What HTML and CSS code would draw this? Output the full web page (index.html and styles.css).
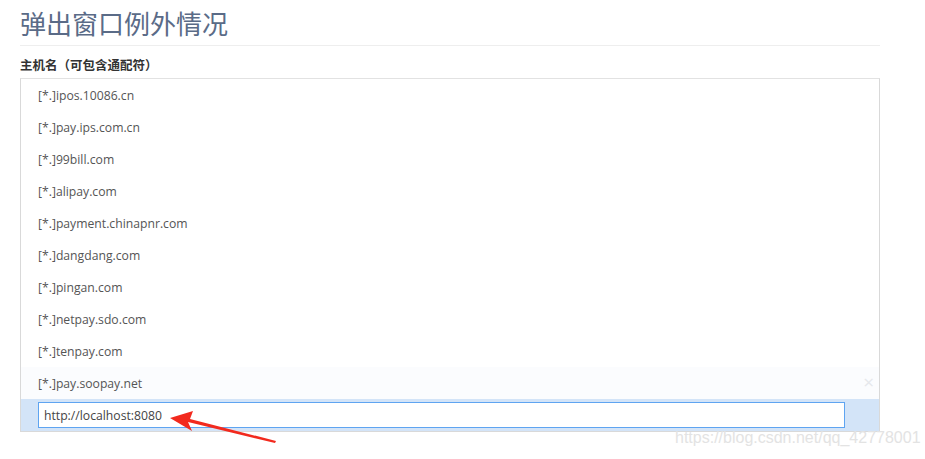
FILE: index.html
```html
<!DOCTYPE html>
<html lang="zh">
<head>
<meta charset="utf-8">
<link rel="stylesheet" href="styles.css">
</head>
<body>
<div class="page">
  <h1 class="title">弹出窗口例外情况</h1>
  <div class="label">主机名（可包含通配符）</div>
  <div class="list">
    <div class="row">[*.]ipos.10086.cn</div>
    <div class="row">[*.]pay.ips.com.cn</div>
    <div class="row">[*.]99bill.com</div>
    <div class="row">[*.]alipay.com</div>
    <div class="row">[*.]payment.chinapnr.com</div>
    <div class="row">[*.]dangdang.com</div>
    <div class="row">[*.]pingan.com</div>
    <div class="row">[*.]netpay.sdo.com</div>
    <div class="row">[*.]tenpay.com</div>
    <div class="row hover">[*.]pay.soopay.net<span class="close">×</span></div>
    <div class="row editing"><div class="input">http://localhost:8080</div></div>
  </div>
  <svg class="arrow" width="120" height="40" viewBox="0 0 120 40">
    <polygon points="7,8 30,1 27,9 113,31 112,33 25,12 29,21" fill="#f22a1e"/>
  </svg>
  <div class="watermark">https://blog.csdn.net/qq_42778001</div>
</div>
</body>
</html>
```
FILE: styles.css
```css
html, body {
  margin: 0;
  padding: 0;
  background: #fff;
}
body {
  font-family: "Segoe UI", "Open Sans", "Noto Sans", "Noto Sans CJK SC", sans-serif;
}
.page {
  position: relative;
  width: 925px;
  height: 459px;
  padding: 0 45px 0 20px;
  box-sizing: border-box;
}
.title {
  margin: 0;
  padding: 6px 0 6px;
  font-family: "Noto Sans CJK SC", sans-serif;
  font-weight: 400;
  font-size: 26px;
  line-height: 33px;
  color: #5a6b87;
  border-bottom: 1px solid #eeeeee;
}
.label {
  margin-top: 10px;
  font-family: "Noto Sans CJK SC", sans-serif;
  font-weight: 700;
  font-size: 12.5px;
  line-height: 17px;
  color: #333;
}
.list {
  margin-top: 5px;
  border: 1px solid #d9d9d9;
  border-top-color: #e2e2e2;
  display: flex;
  flex-direction: column;
}
.row {
  height: 32px;
  padding-left: 17px;
  display: flex;
  align-items: center;
  position: relative;
  font-size: 12.2px;
  color: #555;
}
.row.hover {
  background: #fbfcfe;
}
.close {
  position: absolute;
  right: 5px;
  top: 6px;
  font-size: 19px;
  color: #e6e8ec;
  line-height: 19px;
}
.row.editing {
  background: #d3e4f8;
}
.input {
  width: 807px;
  height: 26px;
  box-sizing: border-box;
  border: 1px solid #5ea4f1;
  background: #fff;
  padding-left: 5px;
  display: flex;
  align-items: center;
  font-size: 12.2px;
  color: #444;
}
.arrow {
  position: absolute;
  left: 163px;
  top: 410px;
}
.watermark {
  position: absolute;
  left: 675px;
  top: 429px;
  font-family: "Liberation Sans", Arial, sans-serif;
  font-size: 16px;
  color: #e3e3e3;
}
```
